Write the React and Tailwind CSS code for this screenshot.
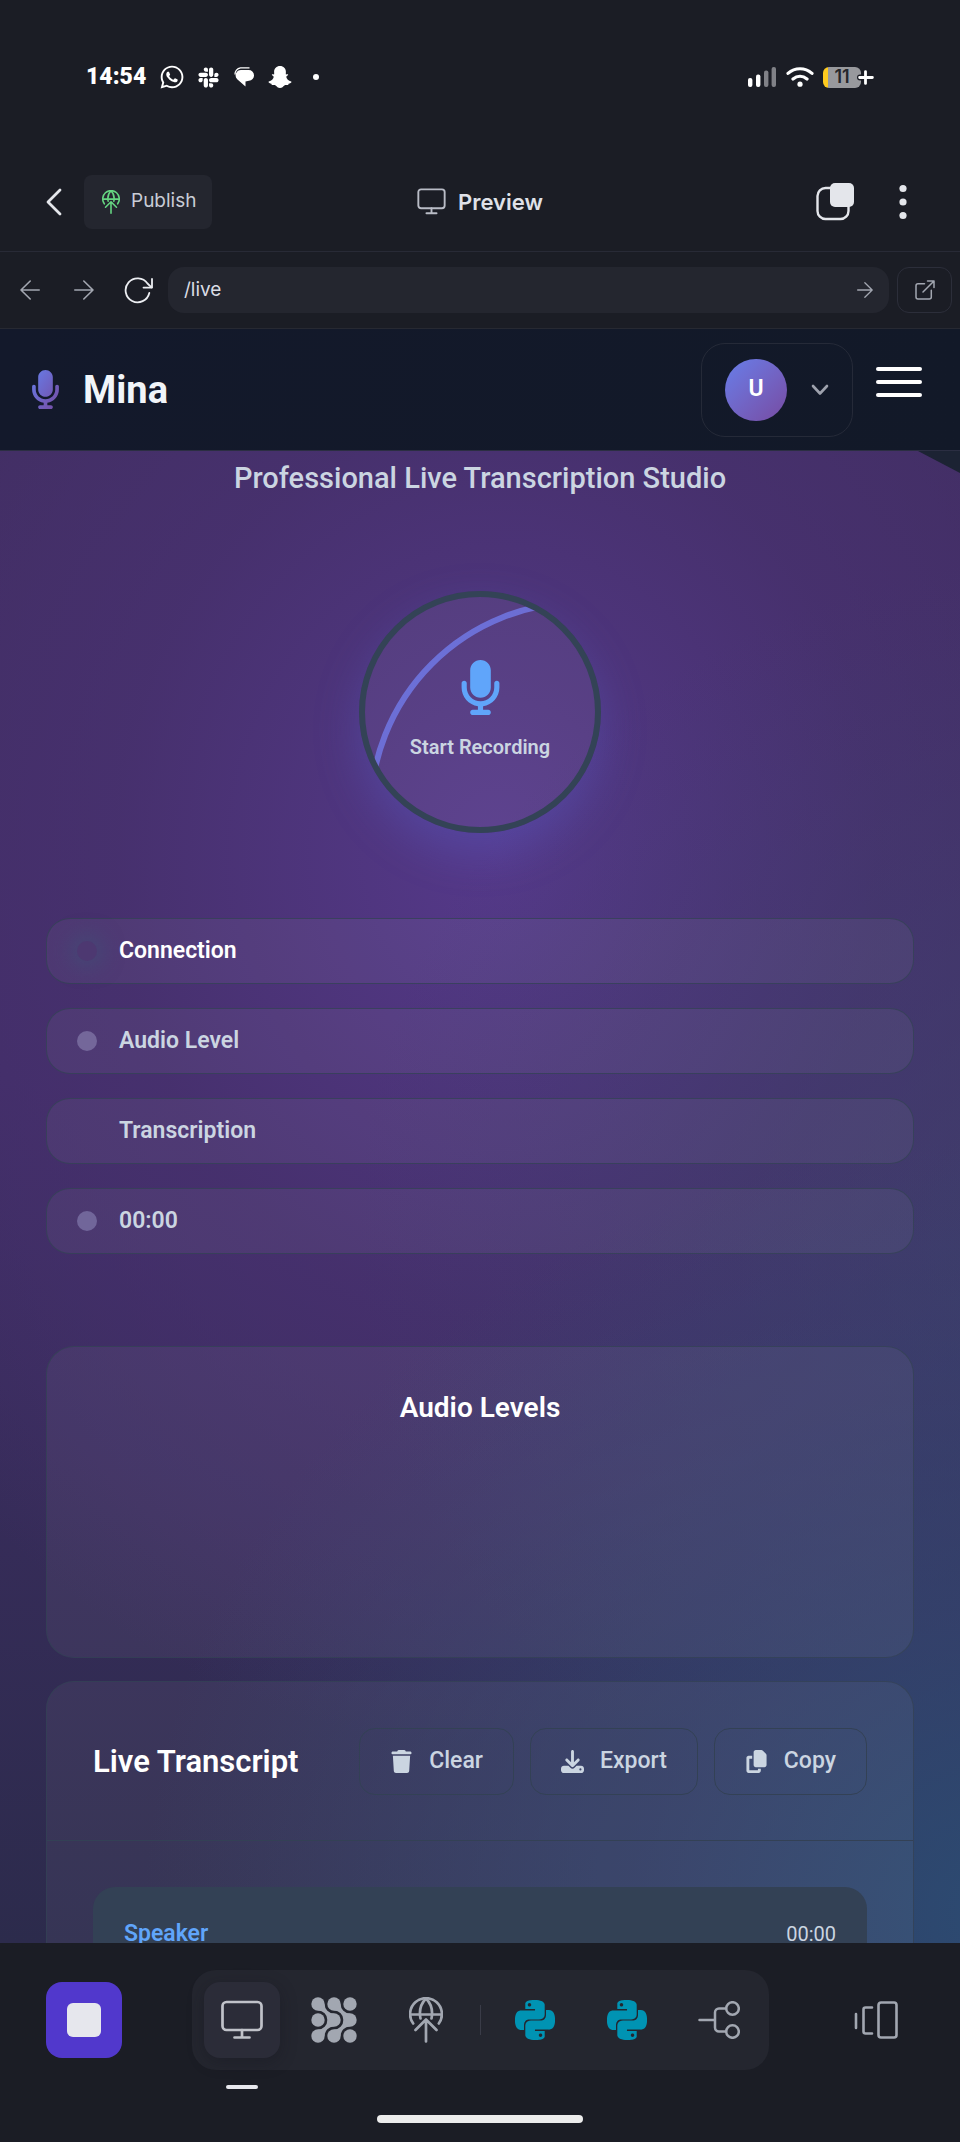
import React from "react";
import { FaMicrophone, FaTrash, FaDownload, FaCopy, FaWhatsapp, FaSlack } from "react-icons/fa6";
import { SiPython } from "react-icons/si";

function DeployIcon({ className, strokeWidth = 2 }) {
  return (
    <svg viewBox="0 0 34 46" fill="none" stroke="currentColor" strokeWidth={strokeWidth} strokeLinecap="round" strokeLinejoin="round" className={className} aria-hidden="true">
      <path d="M4.2 26.5A15.9 15.9 0 1 1 29.8 26.5" />
      <path d="M1.5 17.5H32.5" />
      <path d="M11.5 21.5C10 14 12 6.5 17 1.5C22 6.5 24 14 22.5 21.5" />
      <path d="M17 44.5V23M6.5 33L17 22.5L27.5 33" />
    </svg>
  );
}

function MonitorIcon({ className, strokeWidth = 2 }) {
  return (
    <svg viewBox="0 0 42 40" fill="none" stroke="currentColor" strokeWidth={strokeWidth} strokeLinecap="round" className={className} aria-hidden="true">
      <rect x="1.5" y="2" width="39" height="28" rx="4" />
      <path d="M21 30V37.5M13.5 37.5H28.5" />
    </svg>
  );
}

function ArrowIcon({ className, left }) {
  return (
    <svg viewBox="0 0 20 20" fill="none" stroke="currentColor" strokeWidth="1.6" strokeLinecap="round" strokeLinejoin="round" className={className} aria-hidden="true">
      <path d={left ? "M19.2 10H1M10.2 1L1 10L10.2 19" : "M.8 10H19M9.8 1L19 10L9.8 19"} />
    </svg>
  );
}

function AgentIcon() {
  const centers = [7, 23, 39];
  return (
    <svg viewBox="0 0 46 46" fill="currentColor" className="size-[46px]" aria-hidden="true">
      {centers.map((y) => centers.map((x) => <circle key={x + "-" + y} cx={x} cy={y} r="6.7" />))}
      <path d="M13.6 7A9.4 9.4 0 0 0 23 16.4L16.4 23A9.4 9.4 0 0 0 7 13.6Z" />
      <path d="M29.6 7A9.4 9.4 0 0 0 39 16.4L32.4 23A9.4 9.4 0 0 0 23 13.6Z" />
      <path d="M13.6 39A9.4 9.4 0 0 1 23 29.6L16.4 23A9.4 9.4 0 0 1 7 32.4Z" />
      <path d="M29.6 39A9.4 9.4 0 0 1 39 29.6L32.4 23A9.4 9.4 0 0 1 23 32.4Z" />
    </svg>
  );
}

function StatusBar() {
  return (
    <div className="flex h-[152px] shrink-0 items-center justify-between px-[86px] pt-0.5 text-white">
      <div className="flex items-center">
        <span className="w-[73px] font-['Roboto',sans-serif] text-[23px] leading-7 font-black">14:54</span>
        <FaWhatsapp className="size-[26px]" />
        <FaSlack className="ml-3 size-[23px]" />
        <svg viewBox="0 0 20 20" className="ml-3.5 size-5" fill="currentColor" aria-hidden="true">
          <path d="M7 3H14.5A5.3 5.3 0 0 1 20 8.300A5.300 5.300 0 0 1 15 13.800L11.500 14.500V19.400L3.200 12.200A5.400 5.400 0 0 1 7 3Z" />
          <path d="M1 7.5A6.500 6.500 0 0 1 6.500 .8H15.500" fill="none" stroke="currentColor" strokeWidth="1.300" />
        </svg>
        <svg viewBox="0 0 24 22" className="ml-3.5 h-[22px] w-6" fill="currentColor" aria-hidden="true">
          <path d="M12 0C8.500 0 6.100 2.500 6.100 5.800L6.200 8.300C5.300 8.600 4.400 7.900 3.900 8.600C3.500 9.600 5.800 10 5.700 11C5.500 12.500 3.500 15 .8 15.500C-.2 16.100 1.600 17.400 3.400 17.700C3.700 18.200 3.500 19 4.200 19.100C5.300 19.200 6.500 18.800 7.600 19.400C8.900 20.300 9.900 22 12 22C14.100 22 15.100 20.300 16.400 19.400C17.500 18.800 18.700 19.200 19.800 19.100C20.500 19 20.300 18.200 20.600 17.700C22.400 17.400 24.200 16.100 23.200 15.500C20.500 15 18.500 12.500 18.300 11C18.200 10 20.500 9.600 20.100 8.600C19.600 7.900 18.700 8.600 17.800 8.300L17.900 5.800C17.900 2.500 15.500 0 12 0Z" />
        </svg>
        <span className="ml-[21px] size-1.5 rounded-full bg-white" />
      </div>
      <div className="flex items-center">
        <svg viewBox="0 0 28 20" className="h-5 w-7" fill="currentColor" aria-hidden="true">
          <rect x="0" y="11" width="4.4" height="9" rx="2" />
          <rect x="8" y="7.5" width="4.4" height="12.5" rx="2" />
          <rect x="16" y="3.5" width="4.4" height="16.5" rx="2" fill="#808187" />
          <rect x="23.6" y="0" width="4.4" height="20" rx="2" fill="#808187" />
        </svg>
        <svg viewBox="0 0 28 20" className="ml-[10px] h-5 w-7" fill="none" stroke="currentColor" strokeWidth="3.2" strokeLinecap="round" aria-hidden="true">
          <path d="M2 6.4C9 .2 19 .2 26 6.4M7 12C11.2 8.6 16.8 8.6 21 12" />
          <circle cx="14" cy="17.2" r="2.6" fill="currentColor" stroke="none" />
        </svg>
        <span className="ml-[9px] flex h-[21px] w-[38px] items-center justify-center rounded-md bg-linear-to-r from-[#ffcb1f] from-14% to-[#98999d] to-14% text-[18px] leading-none font-semibold text-[#25262b]">11</span>
        <svg viewBox="0 0 17 17" className="-ml-1 size-[17px]" strokeLinecap="round" aria-hidden="true">
          <path d="M8.5 3V14M3 8.5H14" stroke="#1b1d25" strokeWidth="6" />
          <path d="M8.5 2.6V14.4M2.6 8.5H15.4" stroke="#fff" strokeWidth="2.8" />
        </svg>
      </div>
    </div>
  );
}

function AppBar() {
  return (
    <div className="grid h-[100px] shrink-0 grid-cols-[1fr_auto_1fr] items-center border-b border-[#282a36] pr-11 pl-11">
      <div className="flex items-center gap-5">
        <button type="button" aria-label="Back" className="text-[#e4e6eb]">
          <svg viewBox="0 0 20 28" className="h-7 w-5" fill="none" stroke="currentColor" strokeWidth="2.8" strokeLinecap="round" strokeLinejoin="round" aria-hidden="true">
            <path d="M16 2L4 14L16 26" />
          </svg>
        </button>
        <button type="button" className="flex h-[54px] w-32 items-center gap-[11px] rounded-lg bg-[#24262f] pl-[18px] text-[19px] text-[#c9ccd6]">
          <DeployIcon className="h-6 w-[18px] text-[#66d682]" strokeWidth={3} />
          Publish
        </button>
      </div>
      <h1 className="flex items-center gap-3 text-[22px] leading-7 font-semibold text-[#dfe1e8]">
        <MonitorIcon className="h-[27px] w-[29px] text-[#b9bcc6]" strokeWidth={2.8} />
        Preview
      </h1>
      <div className="mr-1.5 flex items-center justify-end gap-[42px] text-[#e4e6eb]">
        <button type="button" aria-label="Tabs">
          <svg viewBox="0 0 38 38" className="size-[38px]" aria-hidden="true">
            <rect x="1.5" y="5" width="31" height="31" rx="8" fill="none" stroke="currentColor" strokeWidth="2.4" />
            <rect x="14" y="0" width="24" height="24" rx="5" fill="currentColor" />
          </svg>
        </button>
        <button type="button" aria-label="More options">
          <svg viewBox="0 0 14 36" className="h-9 w-3.5" fill="currentColor" aria-hidden="true">
            <circle cx="7" cy="4.5" r="3.6" />
            <circle cx="7" cy="18" r="3.6" />
            <circle cx="7" cy="31.5" r="3.6" />
          </svg>
        </button>
      </div>
    </div>
  );
}

function AddressBar() {
  return (
    <div className="flex h-[77px] shrink-0 items-center border-b border-[#272932] pr-2 pl-5 text-[#a3a7b1]">
      <button type="button" aria-label="Go back"><ArrowIcon left className="size-5" /></button>
      <button type="button" aria-label="Go forward" className="ml-[34px]"><ArrowIcon className="size-5" /></button>
      <button type="button" aria-label="Reload" className="ml-[30px] text-[#eceef2]">
        <svg viewBox="0 0 30 28" className="h-7 w-[30px]" fill="none" stroke="currentColor" strokeWidth="1.8" strokeLinecap="round" strokeLinejoin="round" aria-hidden="true">
          <path d="M25.3 17A12 12 0 1 1 23.5 7.5L27.5 11.4" />
          <path d="M28 3V11.6H19.5" />
        </svg>
      </button>
      <form className="ml-[14px] flex h-[46px] flex-1 items-center rounded-2xl bg-[#24262f] pr-4 pl-4" onSubmit={(e) => e.preventDefault()}>
        <input aria-label="Path" defaultValue="/live" className="min-w-0 flex-1 bg-transparent text-[19px] text-[#dadce4] outline-none" />
        <button type="submit" aria-label="Go"><ArrowIcon className="size-4" /></button>
      </form>
      <a href="/live" aria-label="Open in new tab" className="ml-2 flex h-[46px] w-[55px] items-center justify-center rounded-xl border border-[#2c2e3a]">
        <svg viewBox="0 0 20 20" className="size-5" fill="none" stroke="currentColor" strokeWidth="1.5" strokeLinecap="round" strokeLinejoin="round" aria-hidden="true">
          <path d="M9.5 3.8H3A2 2 0 0 0 1 5.8V17A2 2 0 0 0 3 19H14.3A2 2 0 0 0 16.3 17V10.3" />
          <path d="M12.5 1H19V7.5M19 1L8 12" />
        </svg>
      </a>
    </div>
  );
}

function SiteHeader() {
  return (
    <header className="flex h-[122px] shrink-0 items-center border-b border-[#2b2e42] bg-linear-to-r from-[#13192b] to-[#121928] pr-[38px] pl-8 font-['Roboto',sans-serif]">
      <svg viewBox="16 0 352 512" className="h-[39px] w-[27px]" aria-hidden="true">
        <defs>
          <linearGradient id="mic" x1="0" y1="0" x2="1" y2="1">
            <stop offset="0" stopColor="#667eea" />
            <stop offset="1" stopColor="#764ba2" />
          </linearGradient>
        </defs>
        <path fill="url(#mic)" d="M192 0C139 0 96 43 96 96V256c0 53 43 96 96 96s96-43 96-96V96c0-53-43-96-96-96zM64 216c0-13.3-10.7-24-24-24s-24 10.7-24 24v40c0 89.1 66.2 162.7 152 174.4V464H120c-13.3 0-24 10.7-24 24s10.7 24 24 24h144c13.3 0 24-10.7 24-24s-10.7-24-24-24H216V430.400c85.800-11.700 152-85.300 152-174.400V216c0-13.300-10.700-24-24-24s-24 10.700-24 24v40c0 70.700-57.300 128-128 128s-128-57.300-128-128V216z" />
      </svg>
      <span className="ml-6 text-[38px] leading-none font-bold text-[#f1f5f9]">Mina</span>
      <button type="button" aria-label="Account menu" className="ml-auto flex h-[94px] w-[152px] items-center rounded-3xl border border-[#252a38] pl-[23px]">
        <span className="flex size-[62px] items-center justify-center rounded-full bg-linear-to-br from-[#667eea] to-[#764ba2] text-[23px] font-semibold text-white">U</span>
        <svg viewBox="0 0 18 12" className="ml-6 h-3 w-[18px]" fill="none" stroke="#9ea2ad" strokeWidth="2.6" strokeLinecap="round" strokeLinejoin="round" aria-hidden="true">
          <path d="M2 2L9 9.500L16 2" />
        </svg>
      </button>
      <button type="button" aria-label="Open navigation" className="mb-4 ml-[23px] flex w-[46px] flex-col gap-[9px]">
        <span className="h-1 rounded-sm bg-white" />
        <span className="h-1 rounded-sm bg-white" />
        <span className="h-1 rounded-sm bg-white" />
      </button>
    </header>
  );
}

function RecordButton() {
  return (
    <button type="button" className="relative flex size-[242px] flex-col items-center justify-center overflow-hidden rounded-full border-[6px] border-[#334356] bg-white/5 pb-1 shadow-[0_18px_46px_rgba(91,100,210,0.32)]">
      <svg viewBox="0 0 230 230" className="absolute inset-0 size-full" fill="none" aria-hidden="true">
        <defs>
          <linearGradient id="ring" x1="0" y1="0" x2="1" y2="1">
            <stop offset="0" stopColor="#6a76e0" />
            <stop offset="1" stopColor="#764ba2" />
          </linearGradient>
        </defs>
        <circle cx="215" cy="215" r="209.500" stroke="url(#ring)" strokeWidth="6" />
      </svg>
      <FaMicrophone className="relative size-[55px] text-[#60a5fa]" />
      <span className="relative mt-[18px] text-[20px] leading-7 font-semibold text-[#cbd5e1]">Start Recording</span>
    </button>
  );
}

const statuses = [
  { label: "Connection", text: "text-white", dot: "bg-[#4d3871] shadow-[0_0_20px_6px_rgba(59,84,120,0.5)]" },
  { label: "Audio Level", text: "text-[#cbd5e1]", dot: "bg-[#74679a]" },
  { label: "Transcription", text: "text-[#cbd5e1]", dot: "bg-transparent" },
  { label: "00:00", text: "text-[#cbd5e1]", dot: "bg-[#71669a]" },
];

const actions = [
  { label: "Clear", Icon: FaTrash },
  { label: "Export", Icon: FaDownload },
  { label: "Copy", Icon: FaCopy },
];

function Studio() {
  return (
    <main className="relative min-h-0 flex-1 overflow-hidden bg-[#342f58] bg-[radial-gradient(ellipse_90%_52%_at_105%_98%,#2c4b72_0%,rgba(50,70,112,0.7)_38%,transparent_100%),radial-gradient(ellipse_75%_45%_at_112%_52%,rgba(62,66,108,0.75)_0%,transparent_100%),radial-gradient(ellipse_80%_60%_at_52%_27%,#55398a_0%,rgba(72,49,112,0.8)_50%,transparent_100%),linear-gradient(180deg,#402e60_0%,#402d66_42%,#2c2b4c_100%)] px-[46px] font-['Roboto',sans-serif]">
      <div className="absolute top-0 right-0 h-[22px] w-[42px] bg-[#1c2333] [clip-path:polygon(0_0,100%_0,100%_100%)]" />
      <p className="mt-[11px] text-center text-[29px] leading-8 font-medium text-[#cbd5e1]">Professional Live Transcription Studio</p>
      <div className="mt-[97px] flex justify-center"><RecordButton /></div>
      <ul className="mt-[85px] flex flex-col gap-6">
        {statuses.map((s) => (
          <li key={s.label} className={"flex h-[66px] items-center gap-[22px] rounded-3xl border border-[#334155]/80 bg-white/5 pl-[30px] text-[23px] leading-7 font-semibold " + s.text}>
            <span className={"size-5 rounded-full " + s.dot} />
            <span>{s.label}</span>
          </li>
        ))}
      </ul>
      <section className="mt-[92px] h-[312px] rounded-[28px] border border-[#334155]/80 bg-white/5 pt-[45px]">
        <h2 className="text-center text-[28px] leading-8 font-semibold text-white">Audio Levels</h2>
      </section>
      <section className="mt-[23px] rounded-[28px] border border-[#334155]/80 bg-white/5">
        <div className="flex items-center justify-between border-b border-[#334155] px-[46px] pt-[46px] pb-[45px]">
          <h2 className="text-[31px] leading-9 font-semibold text-white">Live Transcript</h2>
          <div className="flex gap-4">
            {actions.map(({ label, Icon }) => (
              <button key={label} type="button" className="flex h-[67px] items-center gap-4 rounded-2xl border border-[#334155] px-[30px] text-[23px] font-medium text-[#cbd5e1]">
                <Icon className="size-[23px]" />
                {label}
              </button>
            ))}
          </div>
        </div>
        <div className="p-[46px]">
          <article className="min-h-40 rounded-[22px] bg-[#334155] p-[31px]">
            <div className="flex items-center justify-between leading-8">
              <span className="text-[23px] font-semibold text-[#60a5fa]">Speaker</span>
              <time className="text-[20px] text-[#cbd5e1]">00:00</time>
            </div>
          </article>
        </div>
      </section>
    </main>
  );
}

function Dock() {
  const tool = "flex size-[76px] items-center justify-center rounded-2xl";
  return (
    <footer className="shrink-0 bg-[#1b1d25] pt-[27px] pb-[19px]">
      <div className="flex items-center justify-between px-[46px]">
        <button type="button" aria-label="Stop" className={tool + " bg-[#5138cc]"}>
          <span className="size-[34px] rounded-md bg-[#e6e7ed]" />
        </button>
        <nav aria-label="Tools" className="flex h-[100px] items-center gap-4 rounded-3xl bg-[#24262f] px-3 text-[#a2a7b1]">
          <button type="button" aria-label="Preview" aria-current="page" className={tool + " relative bg-[#2b2c38] text-[#c0c2c9] shadow-[0_4px_16px_rgba(20,20,30,0.35)]"}>
            <MonitorIcon className="h-10 w-[42px]" strokeWidth={2.700} />
            <span className="absolute -bottom-[31px] left-1/2 h-1 w-8 -translate-x-1/2 rounded-sm bg-[#e8e8ee]" />
          </button>
          <button type="button" aria-label="Agent" className={tool}><AgentIcon /></button>
          <button type="button" aria-label="Deployments" className={tool}><DeployIcon className="h-[46px] w-[34px]" strokeWidth={2.700} /></button>
          <span className="h-[30px] w-px bg-[#3a3c48]" />
          <button type="button" aria-label="main.py" className={tool}><SiPython className="size-10 text-[#0093b3]" /></button>
          <button type="button" aria-label="app.py" className={tool}><SiPython className="size-10 text-[#0093b3]" /></button>
          <button type="button" aria-label="Version control" className={tool}>
            <svg viewBox="0 0 42 38" className="h-[38px] w-[42px]" fill="none" stroke="currentColor" strokeWidth="2.500" strokeLinecap="round" aria-hidden="true">
              <path d="M1.500 19H17M28 7.500H21A4 4 0 0 0 17 11.500V26.500A4 4 0 0 0 21 30.500H28" />
              <circle cx="34.500" cy="7.500" r="6.300" />
              <circle cx="34.500" cy="30.500" r="6.300" />
            </svg>
          </button>
        </nav>
        <button type="button" aria-label="Switch tabs" className={tool + " text-[#a2a7b1]"}>
          <svg viewBox="0 0 44 38" className="h-[38px] w-11" fill="none" stroke="currentColor" strokeWidth="2.600" strokeLinecap="round" strokeLinejoin="round" aria-hidden="true">
            <rect x="24.500" y="1.500" width="18" height="35" rx="2.500" />
            <path d="M18 6.500H11.500A2 2 0 0 0 9.500 8.500V30.500A2 2 0 0 0 11.500 32.500H18M2 13V27" />
          </svg>
        </button>
      </div>
      <div className="mx-auto mt-[45px] h-2 w-[206px] rounded-full bg-[#ececec]" />
    </footer>
  );
}

export default function App() {
  return (
    <div className="flex h-screen flex-col overflow-hidden bg-[#1b1d25] font-['Inter',sans-serif]">
      <StatusBar />
      <AppBar />
      <AddressBar />
      <SiteHeader />
      <Studio />
      <Dock />
    </div>
  );
}
